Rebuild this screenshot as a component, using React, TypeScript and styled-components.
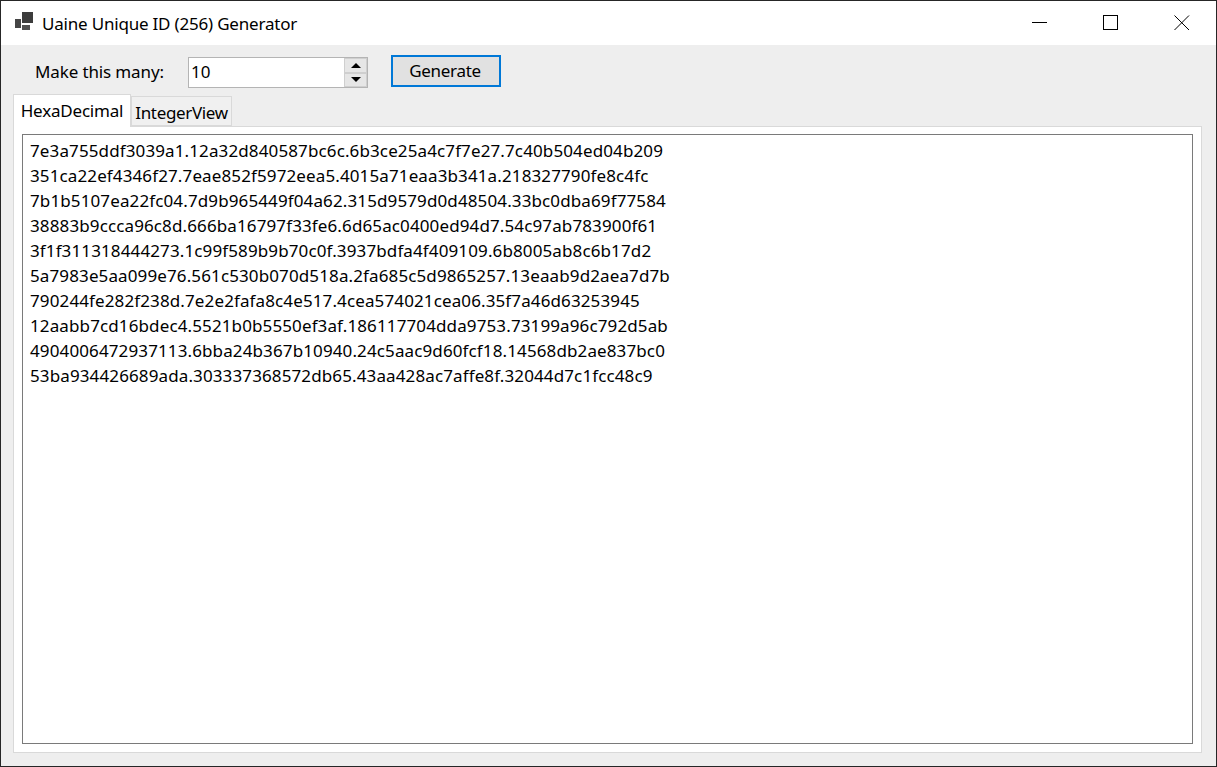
import React from "react";
import styled, { createGlobalStyle } from "styled-components";

const Global = createGlobalStyle`
  html, body { margin: 0; padding: 0; background: #eeeeee; }
  #root { width: 1217px; height: 767px; }
`;

const Window = styled.div`
  width: 1217px;
  height: 767px;
  box-sizing: border-box;
  border: 1px solid #262626;
  background: #eeeeee;
  display: flex;
  flex-direction: column;
  overflow: hidden;
  font-family: "Noto Sans", "Open Sans", "Liberation Sans", sans-serif;
  font-size: 17px;
  color: #000;
`;

const TitleBar = styled.div`
  height: 44px;
  flex: none;
  background: #fff;
  display: flex;
  align-items: center;
  padding-left: 14px;
`;

const AppIcon = styled.svg`
  flex: none;
  margin-bottom: 4px;
`;

const Title = styled.span`
  margin-left: 9px;
  letter-spacing: -0.2px;
  flex: 1;
`;

const CaptionButton = styled.div`
  width: 71px;
  height: 44px;
  box-sizing: border-box;
  padding-left: 3px;
  display: flex;
  align-items: center;
  justify-content: center;
`;

const Toolbar = styled.div`
  height: 49px;
  box-sizing: border-box;
  flex: none;
  display: flex;
  align-items: flex-start;
  padding: 10px 0 0 34px;
`;

const Label = styled.span`
  width: 153px;
  margin-top: 2px;
  line-height: 29px;
  letter-spacing: -0.13px;
`;

const Spinner = styled.div`
  width: 180px;
  height: 31px;
  margin-top: 2px;
  box-sizing: border-box;
  border: 1px solid #b4b4b4;
  background: #fff;
  display: flex;
  align-items: center;
  justify-content: space-between;
  padding-left: 2px;
`;

const SpinValue = styled.span`
  margin-bottom: 2px;
`;

const SpinColumn = styled.div`
  width: 23px;
  height: 29px;
  display: flex;
  flex-direction: column;
`;

const SpinButton = styled.div`
  flex: 1;
  box-sizing: border-box;
  background: #e6e6e6;
  border: 1px solid #cfcfcf;
  display: flex;
  align-items: center;
  justify-content: center;
`;

const GenerateButton = styled.button`
  margin-left: 23px;
  width: 110px;
  height: 32px;
  box-sizing: border-box;
  border: 2px solid #0078d7;
  background: #e1e1e1;
  font: inherit;
  letter-spacing: -0.3px;
  color: #000;
  padding: 0 2px 1px 0;
`;

const TabStrip = styled.div`
  flex: none;
  height: 32px;
  margin-left: 12px;
  display: flex;
  align-items: flex-end;
  position: relative;
  z-index: 1;
`;

const Tab = styled.div<{ $active?: boolean }>`
  box-sizing: border-box;
  border: 1px solid #d9d9d9;
  display: flex;
  align-items: center;
  justify-content: center;
  background: ${(p) => (p.$active ? "#fff" : "#f0f0f0")};
  height: ${(p) => (p.$active ? "33px" : "30px")};
  width: ${(p) => (p.$active ? "118px" : "101px")};
  letter-spacing: ${(p) => (p.$active ? "-0.2px" : "-0.35px")};
  border-bottom: ${(p) => (p.$active ? "none" : "1px solid #d9d9d9")};
  margin-bottom: ${(p) => (p.$active ? "-1px" : "0")};
  padding: ${(p) => (p.$active ? "0 0 2px" : "2px 0 0")};
`;

const TabPanel = styled.div`
  flex: none;
  margin-left: 12px;
  width: 1189px;
  height: 627px;
  box-sizing: border-box;
  background: #fff;
  border: 1px solid #d9d9d9;
  padding: 7px 8px 8px;
  display: flex;
`;

const TextBox = styled.div`
  flex: 1;
  box-sizing: border-box;
  border: 1px solid #7a7a7a;
  background: #fff;
  padding: 3px 7px;
  line-height: 25px;
  letter-spacing: 0.12px;
`;

const Row = styled.div`
  white-space: nowrap;
`;

const rows = [
  "7e3a755ddf3039a1.12a32d840587bc6c.6b3ce25a4c7f7e27.7c40b504ed04b209",
  "351ca22ef4346f27.7eae852f5972eea5.4015a71eaa3b341a.218327790fe8c4fc",
  "7b1b5107ea22fc04.7d9b965449f04a62.315d9579d0d48504.33bc0dba69f77584",
  "38883b9ccca96c8d.666ba16797f33fe6.6d65ac0400ed94d7.54c97ab783900f61",
  "3f1f311318444273.1c99f589b9b70c0f.3937bdfa4f409109.6b8005ab8c6b17d2",
  "5a7983e5aa099e76.561c530b070d518a.2fa685c5d9865257.13eaab9d2aea7d7b",
  "790244fe282f238d.7e2e2fafa8c4e517.4cea574021cea06.35f7a46d63253945",
  "12aabb7cd16bdec4.5521b0b5550ef3af.186117704dda9753.73199a96c792d5ab",
  "4904006472937113.6bba24b367b10940.24c5aac9d60fcf18.14568db2ae837bc0",
  "53ba934426689ada.303337368572db65.43aa428ac7affe8f.32044d7c1fcc48c9",
];

export default function App() {
  return (
    <Window>
      <Global />
      <TitleBar>
        <AppIcon width="18" height="18" viewBox="0 0 18 18">
          <rect x="0" y="7" width="6" height="9" fill="#454545" />
          <rect x="7" y="0" width="11" height="11" fill="#3c3c3c" />
          <rect x="7" y="13" width="8" height="5" fill="#505050" />
        </AppIcon>
        <Title>Uaine Unique ID (256) Generator</Title>
        <CaptionButton>
          <svg width="16" height="16" viewBox="0 0 16 16">
            <path d="M0 7.5h15" stroke="#000" fill="none" />
          </svg>
        </CaptionButton>
        <CaptionButton>
          <svg width="16" height="16" viewBox="0 0 16 16">
            <rect x="0.5" y="0.5" width="14" height="14" stroke="#000" fill="none" />
          </svg>
        </CaptionButton>
        <CaptionButton>
          <svg width="16" height="16" viewBox="0 0 16 16">
            <path d="M0.5 0.5l14.5 14.5M15 0.5l-14.5 14.5" stroke="#000" fill="none" />
          </svg>
        </CaptionButton>
      </TitleBar>
      <Toolbar>
        <Label>Make this many:</Label>
        <Spinner>
          <SpinValue>10</SpinValue>
          <SpinColumn>
            <SpinButton>
              <svg width="10" height="5" viewBox="0 0 10 5"><path d="M5 0L10 5H0z" fill="#000" /></svg>
            </SpinButton>
            <SpinButton>
              <svg width="10" height="5" viewBox="0 0 10 5"><path d="M0 0h10L5 5z" fill="#000" /></svg>
            </SpinButton>
          </SpinColumn>
        </Spinner>
        <GenerateButton>Generate</GenerateButton>
      </Toolbar>
      <TabStrip>
        <Tab $active>HexaDecimal</Tab>
        <Tab>IntegerView</Tab>
      </TabStrip>
      <TabPanel>
        <TextBox>
          {rows.map((r) => (
            <Row key={r}>{r}</Row>
          ))}
        </TextBox>
      </TabPanel>
    </Window>
  );
}
